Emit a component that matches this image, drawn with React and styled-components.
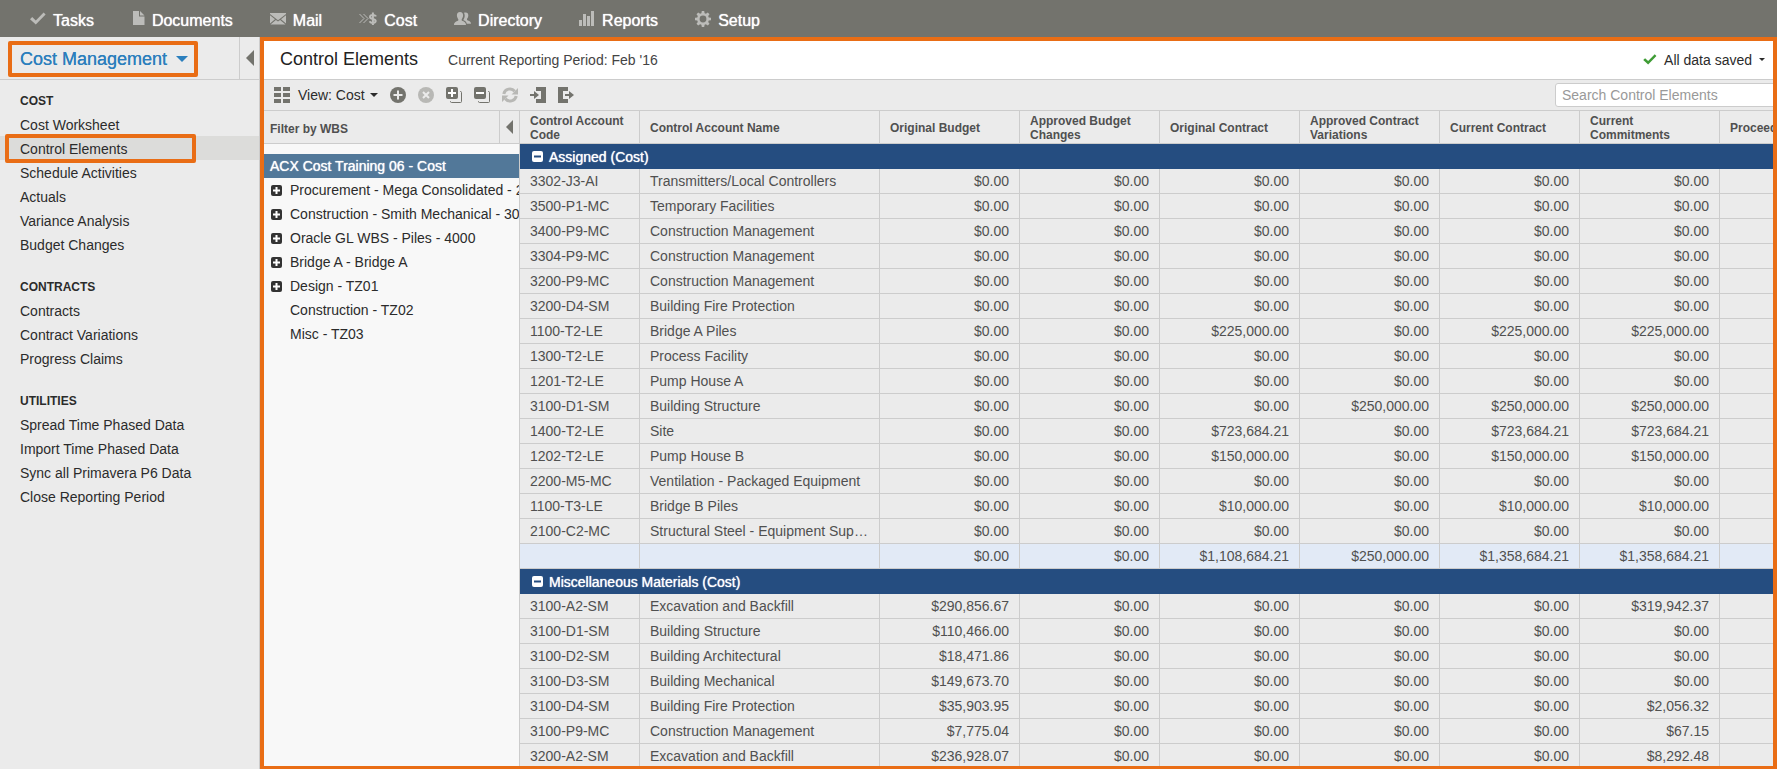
import React from 'react';
import styled, { createGlobalStyle } from 'styled-components';

const colors = {
  bar: '#73736d',
  barIcon: '#bcbcb9',
  accent: '#e96d15',
  panel: '#ebebeb',
  line: '#cccccc',
  active: '#dcdcda',
  link: '#2b7fbd',
  group: '#254d80',
  treeActive: '#527899',
  total: '#e2eaf6',
  text: '#2b2b2b',
  cell: '#505050',
  icon: '#73736d',
  iconOff: '#b8b8b5',
};

const GlobalStyle = createGlobalStyle`
  * {
    box-sizing: border-box;
  }

  body {
    margin: 0;
    overflow: hidden;
    font-family: 'Liberation Sans', Arial, sans-serif;
    font-size: 14px;
    color: ${colors.text};
    background-color: ${colors.panel};
  }

  button,
  input {
    font: inherit;
    color: inherit;
  }

  a {
    color: inherit;
    text-decoration: none;
  }

  ul {
    margin: 0;
    padding: 0;
    list-style: none;
  }
`;

const Page = styled.div`
  height: 100vh;
  display: flex;
  flex-direction: column;
`;

const NavBar = styled.nav`
  flex: none;
  height: 37px;
  display: flex;
  align-items: center;
  gap: 37px;
  padding: 4px 30px 0;
  background-color: ${colors.bar};
`;

const NavLink = styled.a`
  display: flex;
  align-items: center;
  gap: 7px;
  font-size: 16px;
  line-height: 20px;
  color: #ffffff;
  text-shadow: 0 0 1px #ffffff;

  svg {
    display: block;
    margin-bottom: 4px;
    fill: ${colors.barIcon};
  }
`;

const Body = styled.div`
  flex: 1;
  min-height: 0;
  display: flex;
`;

const Sidebar = styled.aside`
  flex: none;
  width: 260px;
  border-right: 1px solid ${colors.line};
`;

const SidebarHeader = styled.div`
  height: 43px;
  display: flex;
  border-bottom: 1px solid ${colors.line};
`;

const ModuleButton = styled.button`
  align-self: flex-start;
  height: 36px;
  margin: 4px auto 0 8px;
  padding: 0 6px 0 8px;
  display: flex;
  align-items: center;
  gap: 9px;
  border: 4px solid ${colors.accent};
  border-radius: 2px;
  background: none;
  font-size: 18px;
  line-height: 28px;
  color: ${colors.link};
  text-shadow: 0 0 0 ${colors.link};
`;

const CollapseButton = styled.button`
  width: 20px;
  padding: 0;
  display: flex;
  align-items: center;
  justify-content: center;
  border: 0;
  border-left: 1px solid ${colors.line};
  background: none;
`;

const Caret = styled.span`
  width: 0;
  border: ${({ $size }) => $size}px solid transparent;
  border-top-color: currentColor;
  border-bottom: 0;
`;

const ArrowLeft = styled.span`
  border: ${({ $size }) => $size}px solid transparent;
  border-right-color: ${colors.icon};
  border-left: 0;
`;

const Menu = styled.div`
  padding-top: 8px;
  display: flex;
  flex-direction: column;
  gap: 18px;
`;

const MenuTitle = styled.h2`
  margin: 0;
  padding-left: 20px;
  font-size: 12px;
  line-height: 26px;
  height: 24px;
`;

const MenuItem = styled.li`
  height: 24px;
  padding: 0 63px 0 5px;
  background-color: ${({ $active }) => ($active ? colors.active : 'transparent')};
`;

const MenuLink = styled.a`
  position: relative;
  top: -2px;
  display: block;
  height: 29px;
  padding-left: 11px;
  border: 4px solid ${({ $active }) => ($active ? colors.accent : 'transparent')};
  border-radius: 2px;
  line-height: 22px;
  white-space: nowrap;
`;

const Main = styled.main`
  flex: 1;
  min-width: 0;
  display: flex;
  flex-direction: column;
  overflow: hidden;
  border: 4px solid ${colors.accent};
  border-bottom-width: 3px;
`;

const TitleBar = styled.header`
  flex: none;
  height: 39px;
  display: flex;
  align-items: center;
  gap: 30px;
  padding: 0 8px 1px 16px;
  border-bottom: 1px solid ${colors.line};
  background-color: #ffffff;
`;

const Title = styled.h1`
  margin: 0;
  font-size: 18px;
  font-weight: 400;
  color: #222222;
`;

const Period = styled.span`
  padding-top: 1px;
  color: #444444;
`;

const SaveStatus = styled.button`
  margin-left: auto;
  padding: 0;
  display: flex;
  align-items: center;
  gap: 7px;
  border: 0;
  background: none;
`;

const Toolbar = styled.div`
  flex: none;
  height: 31px;
  display: flex;
  align-items: center;
  gap: 12px;
  padding-left: 10px;
  border-bottom: 1px solid ${colors.line};
`;

const ViewButton = styled.button`
  padding: 0;
  display: flex;
  align-items: center;
  gap: 5px;
  border: 0;
  background: none;

  svg {
    margin-right: 3px;
  }
`;

const ToolButton = styled.button`
  width: 16px;
  height: 16px;
  padding: 0;
  border: 0;
  background: none;
  color: ${({ disabled }) => (disabled ? colors.iconOff : colors.icon)};

  svg {
    display: block;
  }
`;

const SearchInput = styled.input`
  flex: none;
  width: 230px;
  height: 24px;
  margin: 0 -12px 0 auto;
  padding: 0 6px;
  border: 1px solid ${colors.line};
  border-radius: 3px;
  background-color: #ffffff;

  &::placeholder {
    color: #999999;
    opacity: 1;
  }
`;

const Workspace = styled.div`
  flex: 1;
  min-height: 0;
  display: flex;
`;

const TreePanel = styled.section`
  flex: none;
  width: 256px;
  overflow: hidden;
  border-right: 1px solid ${colors.line};
  background-color: #f8f8f8;
`;

const TreeHeader = styled.div`
  height: 33px;
  display: flex;
  justify-content: space-between;
  padding-left: 6px;
  border-bottom: 1px solid ${colors.line};
  background-color: ${colors.panel};
`;

const TreeTitle = styled.h2`
  margin: 0;
  font-size: 12px;
  line-height: 36px;
  color: ${colors.cell};
`;

const Tree = styled.ul`
  padding-top: 10px;
`;

const TreeRoot = styled.li`
  padding-left: 6px;
  line-height: 24px;
  color: #ffffff;
  text-shadow: 0 0 1px #ffffff;
  background-color: ${colors.treeActive};
`;

const TreeItem = styled.li`
  height: 24px;
  display: grid;
  grid-template-columns: 11px auto;
  align-items: center;
  gap: 8px;
  padding-left: 7px;
  white-space: nowrap;
`;

const ToggleButton = styled.button`
  width: 11px;
  height: 11px;
  padding: 0;
  border: 0;
  background: none;
  color: ${({ $color }) => $color};

  svg {
    display: block;
  }
`;

const TableArea = styled.div`
  flex: 1;
  min-width: 0;
  overflow: hidden;
`;

const Table = styled.table`
  width: 1340px;
  table-layout: fixed;
  border-collapse: separate;
  border-spacing: 0;
`;

const HeadCell = styled.th`
  width: ${({ $width }) => $width}px;
  height: 33px;
  padding: 2px 10px 0;
  border-right: 1px solid ${colors.line};
  border-bottom: 1px solid ${colors.line};
  font-size: 12px;
  line-height: 14px;
  text-align: left;
  color: ${colors.cell};
`;

const GroupCell = styled.td`
  height: 25px;
  padding: 0 12px;
  color: #ffffff;
  text-shadow: 0 0 1px #ffffff;
  background-color: ${colors.group};
`;

const GroupLabel = styled.div`
  display: flex;
  align-items: center;
  gap: 6px;
`;

const Row = styled.tr`
  background-color: ${({ $total }) => ($total ? colors.total : 'transparent')};
`;

const Cell = styled.td`
  height: 25px;
  padding: 0 10px;
  border-right: 1px solid ${colors.line};
  border-bottom: 1px solid ${colors.line};
  overflow: hidden;
  text-overflow: ellipsis;
  white-space: nowrap;
  line-height: 24px;
  text-align: ${({ $money }) => ($money ? 'right' : 'left')};
  color: ${colors.cell};
`;

const CheckIcon = ({ width = 16, height = 13, fill }) => (
  <svg width={width} height={height} viewBox="0 0 16 13" fill={fill}>
    <path d="M0 7.2 2.2 5 5.8 8.400 13.600.4 15.600 2.400 5.800 12.400Z" />
  </svg>
);

const DocumentIcon = () => (
  <svg width="14" height="15" viewBox="-2 0 14 15">
    <path d="M0 0h6v5.5h5.5V14H0Z" />
    <path d="M7 0 11.5 4.5H7Z" />
  </svg>
);

const MailIcon = () => (
  <svg width="16" height="12" viewBox="0 0 16 12">
    <path d="M0 0h16v1L8 7.2 0 1Z" />
    <path d="M0 2.3 5 6.2 0 10.4ZM16 2.3v8.1l-5-4.2ZM5.9 6.9 8 8.5l2.1-1.6 5.4 4.6H.5Z" />
  </svg>
);

const CostIcon = () => (
  <svg width="18" height="14" viewBox="0 0 18 14">
    <path d="M.5 2l4.500 4.500L.5 11M4.500 2l4.500 4.500L4.500 11" fill="none" stroke={colors.barIcon} />
    <path
      d="M16.800 4.600C16.400 2.900 11 2.200 11 4.900c0 2.600 5.700 1.500 5.700 4.100 0 2.700-5.300 2.300-6 .2M13.900.5v12.500"
      fill="none"
      stroke={colors.barIcon}
      strokeWidth="2"
    />
  </svg>
);

const PeopleIcon = () => (
  <svg width="17" height="14" viewBox="0 0 17 14">
    <path d="M6 0c2.200 0 3.100 1.500 3.100 3.300S8.300 6.500 7.700 7.200v1.300c.8.800 4.300 1 4.300 4.500H0c0-3.500 3.500-3.700 4.300-4.500V7.200C3.700 6.500 2.900 5.100 2.900 3.300S3.800 0 6 0Z" />
    <path d="M10 .8c3-1.200 4.400.6 4.300 2.700 0 1.500-.7 2.700-1.300 3.300v1.200c.8.700 4 .9 4 3.800h-4.200c-.3-2-1.600-2.900-3.300-3.600V7.500c1.300-1.500 1.700-4.500.5-6.700Z" />
  </svg>
);

const ReportsIcon = () => (
  <svg width="16" height="15" viewBox="0 0 16 15">
    <path d="M0 9h3v6H0ZM4 3h3v12H4ZM8 5h3v10H8ZM12 0h3v15h-3Z" />
  </svg>
);

const GearIcon = () => (
  <svg width="16" height="16" viewBox="0 0 16 16">
    <path
      fillRule="evenodd"
      d="M6.800 0h2.400l.4 2.300 1.300.5L12.800 1.500l1.700 1.700-1.300 1.900.5 1.300 2.300.4v2.400l-2.300.4-.5 1.300 1.300 1.900-1.700 1.700-1.900-1.300-1.300.5L9.200 16H6.800l-.4-2.300-1.300-.5-1.900 1.300-1.700-1.700 1.300-1.900-.5-1.300L0 9.200V6.800l2.300-.4.5-1.300L1.500 3.200l1.700-1.700 1.900 1.300 1.300-.5ZM8 4.600a3.400 3.400 0 1 0 0 6.800 3.400 3.400 0 0 0 0-6.800Z"
    />
  </svg>
);

const GridIcon = () => (
  <svg width="16" height="16" viewBox="0 0 16 16" fill={colors.icon}>
    <path d="M0 0h7v4H0ZM9 0h7v4H9ZM0 6h7v4H0ZM9 6h7v4H9ZM0 12h7v4H0ZM9 12h7v4H9Z" />
  </svg>
);

const AddIcon = () => (
  <svg width="16" height="16" viewBox="0 0 16 16">
    <circle cx="8" cy="8" r="8" fill="currentColor" />
    <path d="M8 3.500v9M3.500 8h9" stroke={colors.panel} strokeWidth="2" />
  </svg>
);

const RemoveIcon = () => (
  <svg width="16" height="16" viewBox="0 0 16 16">
    <circle cx="8" cy="8" r="8" fill="currentColor" />
    <path d="m5 5 6 6M11 5l-6 6" stroke={colors.panel} strokeWidth="2" />
  </svg>
);

const StackIcon = ({ plus }) => (
  <svg width="16" height="16" viewBox="0 0 16 16">
    <rect width="12" height="12" rx="2" fill="currentColor" />
    <path d="M14 4.500h.5q1 0 1 1v9q0 1-1 1h-9q-1 0-1-1V14" fill="none" stroke="currentColor" />
    <path
      d={plus ? 'M6 2v8M2 6h8' : 'M2 6h8'}
      stroke="#ffffff"
      strokeWidth="2"
    />
  </svg>
);

const RefreshIcon = () => (
  <svg width="16" height="16" viewBox="0 0 16 16">
    <path
      d="M1.800 7C2.800 1.600 9.500.3 12.700 4.200M14.200 9c-1 5.400-7.700 6.700-10.900 2.800"
      fill="none"
      stroke="currentColor"
      strokeWidth="3"
    />
    <path d="M16 1v6.500H9.500ZM0 15V8.500h6.500Z" fill="currentColor" />
  </svg>
);

const ImportIcon = () => (
  <svg width="16" height="16" viewBox="0 0 16 16" fill="currentColor">
    <path d="M6 0h10v16H6v-4h5V4H6Z" />
    <path d="M0 7h4V4l5 4-5 4V9H0Z" />
  </svg>
);

const ExportIcon = () => (
  <svg width="16" height="16" viewBox="0 0 16 16" fill="currentColor">
    <path d="M0 0h10v4H5v8h5v4H0Z" />
    <path d="M7 7h4V4l5 4-5 4V9H7Z" />
  </svg>
);

const ToggleIcon = ({ open, mark }) => (
  <svg width="11" height="11" viewBox="0 0 11 11">
    <rect width="11" height="11" rx="2" fill="currentColor" />
    <path
      d={open ? 'M2 5.500h7' : 'M5.500 2v7M2 5.500h7'}
      stroke={mark}
      strokeWidth="2"
    />
  </svg>
);

const navItems = [
  { label: 'Tasks', Icon: CheckIcon },
  { label: 'Documents', Icon: DocumentIcon },
  { label: 'Mail', Icon: MailIcon },
  { label: 'Cost', Icon: CostIcon },
  { label: 'Directory', Icon: PeopleIcon },
  { label: 'Reports', Icon: ReportsIcon },
  { label: 'Setup', Icon: GearIcon },
];

const menu = [
  {
    title: 'COST',
    items: [
      'Cost Worksheet',
      'Control Elements',
      'Schedule Activities',
      'Actuals',
      'Variance Analysis',
      'Budget Changes',
    ],
  },
  {
    title: 'CONTRACTS',
    items: ['Contracts', 'Contract Variations', 'Progress Claims'],
  },
  {
    title: 'UTILITIES',
    items: [
      'Spread Time Phased Data',
      'Import Time Phased Data',
      'Sync all Primavera P6 Data',
      'Close Reporting Period',
    ],
  },
];

const tools = [
  { label: 'Add', icon: <AddIcon /> },
  { label: 'Remove', icon: <RemoveIcon />, disabled: true },
  { label: 'Expand all', icon: <StackIcon plus /> },
  { label: 'Collapse all', icon: <StackIcon /> },
  { label: 'Refresh', icon: <RefreshIcon />, disabled: true },
  { label: 'Import', icon: <ImportIcon /> },
  { label: 'Export', icon: <ExportIcon /> },
];

const tree = [
  { label: 'Procurement - Mega Consolidated - 2000', children: true },
  { label: 'Construction - Smith Mechanical - 3000', children: true },
  { label: 'Oracle GL WBS - Piles - 4000', children: true },
  { label: 'Bridge A - Bridge A', children: true },
  { label: 'Design - TZ01', children: true },
  { label: 'Construction - TZ02' },
  { label: 'Misc - TZ03' },
];

const columns = [
  { label: 'Control Account Code', width: 120 },
  { label: 'Control Account Name', width: 240 },
  { label: 'Original Budget', width: 140 },
  { label: 'Approved Budget Changes', width: 140 },
  { label: 'Original Contract', width: 140 },
  { label: 'Approved Contract Variations', width: 140 },
  { label: 'Current Contract', width: 140 },
  { label: 'Current Commitments', width: 140 },
  { label: 'Proceeding', width: 140 },
];

const Z = '$0.00';

// code, name, then the six amounts
const groups = [
  {
    title: 'Assigned (Cost)',
    rows: [
      ['3302-J3-AI', 'Transmitters/Local Controllers', Z, Z, Z, Z, Z, Z],
      ['3500-P1-MC', 'Temporary Facilities', Z, Z, Z, Z, Z, Z],
      ['3400-P9-MC', 'Construction Management', Z, Z, Z, Z, Z, Z],
      ['3304-P9-MC', 'Construction Management', Z, Z, Z, Z, Z, Z],
      ['3200-P9-MC', 'Construction Management', Z, Z, Z, Z, Z, Z],
      ['3200-D4-SM', 'Building Fire Protection', Z, Z, Z, Z, Z, Z],
      ['1100-T2-LE', 'Bridge A Piles', Z, Z, '$225,000.00', Z, '$225,000.00', '$225,000.00'],
      ['1300-T2-LE', 'Process Facility', Z, Z, Z, Z, Z, Z],
      ['1201-T2-LE', 'Pump House A', Z, Z, Z, Z, Z, Z],
      ['3100-D1-SM', 'Building Structure', Z, Z, Z, '$250,000.00', '$250,000.00', '$250,000.00'],
      ['1400-T2-LE', 'Site', Z, Z, '$723,684.21', Z, '$723,684.21', '$723,684.21'],
      ['1202-T2-LE', 'Pump House B', Z, Z, '$150,000.00', Z, '$150,000.00', '$150,000.00'],
      ['2200-M5-MC', 'Ventilation - Packaged Equipment', Z, Z, Z, Z, Z, Z],
      ['1100-T3-LE', 'Bridge B Piles', Z, Z, '$10,000.00', Z, '$10,000.00', '$10,000.00'],
      ['2100-C2-MC', 'Structural Steel - Equipment Supports', Z, Z, Z, Z, Z, Z],
    ],
    total: ['', '', Z, Z, '$1,108,684.21', '$250,000.00', '$1,358,684.21', '$1,358,684.21'],
  },
  {
    title: 'Miscellaneous Materials (Cost)',
    rows: [
      ['3100-A2-SM', 'Excavation and Backfill', '$290,856.67', Z, Z, Z, Z, '$319,942.37'],
      ['3100-D1-SM', 'Building Structure', '$110,466.00', Z, Z, Z, Z, Z],
      ['3100-D2-SM', 'Building Architectural', '$18,471.86', Z, Z, Z, Z, Z],
      ['3100-D3-SM', 'Building Mechanical', '$149,673.70', Z, Z, Z, Z, Z],
      ['3100-D4-SM', 'Building Fire Protection', '$35,903.95', Z, Z, Z, Z, '$2,056.32'],
      ['3100-P9-MC', 'Construction Management', '$7,775.04', Z, Z, Z, Z, '$67.15'],
      ['3200-A2-SM', 'Excavation and Backfill', '$236,928.07', Z, Z, Z, Z, '$8,292.48'],
    ],
  },
];

const DataRow = ({ values, total }) => (
  <Row $total={total}>
    {columns.map((column, i) => (
      <Cell key={column.label} $money={i > 1}>
        {values[i]}
      </Cell>
    ))}
  </Row>
);

const App = () => {
  return (
    <Page>
      <GlobalStyle />
      <NavBar>
        {navItems.map(({ label, Icon }) => (
          <NavLink key={label} href="#">
            <Icon />
            {label}
          </NavLink>
        ))}
      </NavBar>
      <Body>
        <Sidebar>
          <SidebarHeader>
            <ModuleButton>
              Cost Management
              <Caret $size={6} />
            </ModuleButton>
            <CollapseButton aria-label="Collapse menu">
              <ArrowLeft $size={8} />
            </CollapseButton>
          </SidebarHeader>
          <Menu>
            {menu.map(({ title, items }) => (
              <section key={title}>
                <MenuTitle>{title}</MenuTitle>
                <ul>
                  {items.map((item) => (
                    <MenuItem key={item} $active={item === 'Control Elements'}>
                      <MenuLink href="#" $active={item === 'Control Elements'}>
                        {item}
                      </MenuLink>
                    </MenuItem>
                  ))}
                </ul>
              </section>
            ))}
          </Menu>
        </Sidebar>
        <Main>
          <TitleBar>
            <Title>Control Elements</Title>
            <Period>Current Reporting Period: Feb '16</Period>
            <SaveStatus>
              <CheckIcon width={14} height={11} fill="#3f9c35" />
              All data saved
              <Caret $size={3} />
            </SaveStatus>
          </TitleBar>
          <Toolbar>
            <ViewButton>
              <GridIcon />
              View: Cost
              <Caret $size={4} />
            </ViewButton>
            {tools.map(({ label, icon, disabled }) => (
              <ToolButton key={label} aria-label={label} disabled={disabled}>
                {icon}
              </ToolButton>
            ))}
            <SearchInput
              type="search"
              aria-label="Search Control Elements"
              placeholder="Search Control Elements"
            />
          </Toolbar>
          <Workspace>
            <TreePanel>
              <TreeHeader>
                <TreeTitle>Filter by WBS</TreeTitle>
                <CollapseButton aria-label="Collapse filter">
                  <ArrowLeft $size={7} />
                </CollapseButton>
              </TreeHeader>
              <Tree>
                <TreeRoot>ACX Cost Training 06 - Cost</TreeRoot>
                {tree.map(({ label, children }) => (
                  <TreeItem key={label}>
                    {children ? (
                      <ToggleButton aria-label={`Expand ${label}`} $color="#333333">
                        <ToggleIcon mark="#ffffff" />
                      </ToggleButton>
                    ) : (
                      <span />
                    )}
                    {label}
                  </TreeItem>
                ))}
              </Tree>
            </TreePanel>
            <TableArea>
              <Table>
                <thead>
                  <tr>
                    {columns.map(({ label, width }) => (
                      <HeadCell key={label} $width={width}>
                        {label}
                      </HeadCell>
                    ))}
                  </tr>
                </thead>
                {groups.map(({ title, rows, total }) => (
                  <tbody key={title}>
                    <tr>
                      <GroupCell colSpan={columns.length}>
                        <GroupLabel>
                          <ToggleButton aria-label={`Collapse ${title}`} $color="#ffffff">
                            <ToggleIcon open mark={colors.group} />
                          </ToggleButton>
                          {title}
                        </GroupLabel>
                      </GroupCell>
                    </tr>
                    {rows.map((row) => (
                      <DataRow key={row[0]} values={row} />
                    ))}
                    {total && <DataRow values={total} total />}
                  </tbody>
                ))}
              </Table>
            </TableArea>
          </Workspace>
        </Main>
      </Body>
    </Page>
  );
};

export default App;
